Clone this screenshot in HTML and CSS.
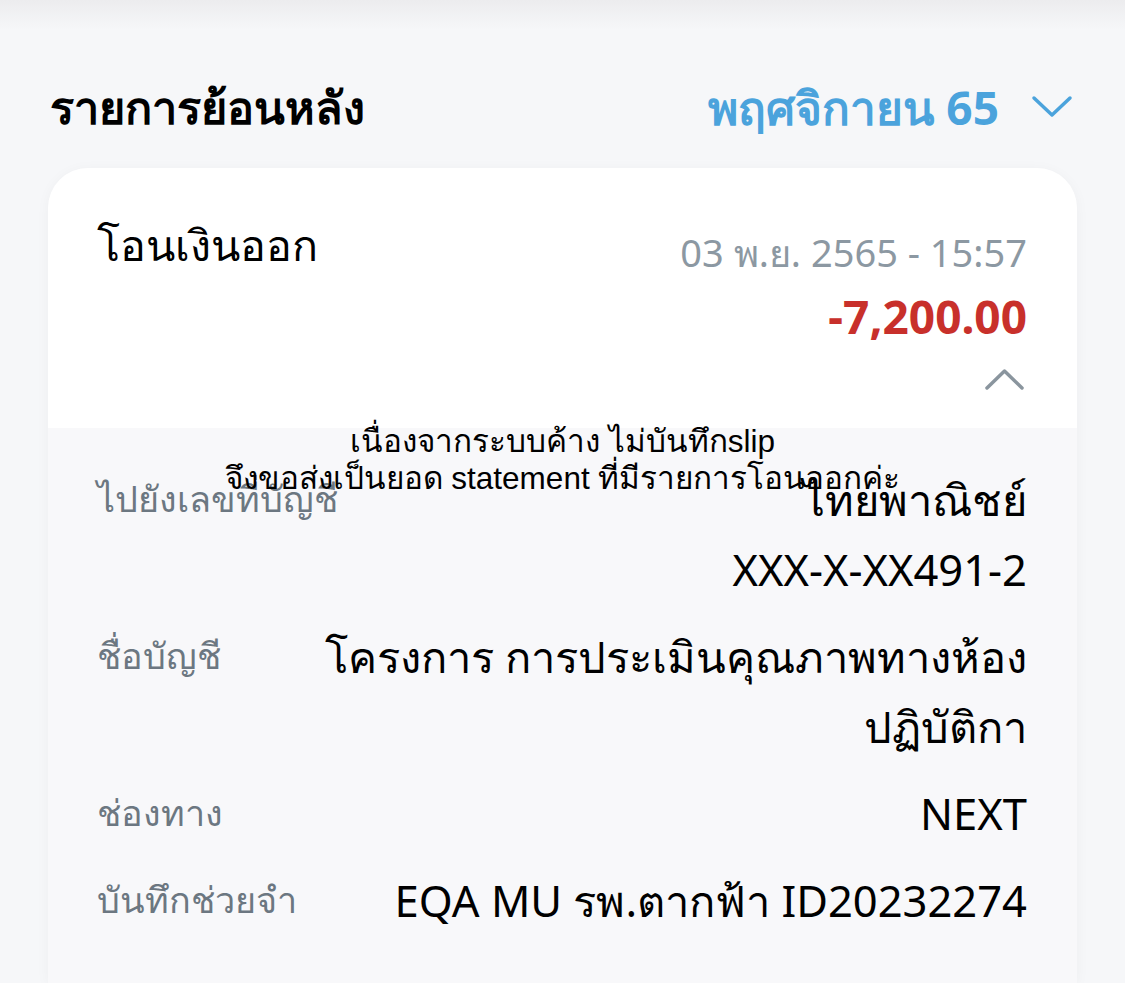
FILE: index.html
```html
<!DOCTYPE html>
<html lang="th">
<head>
<meta charset="utf-8">
<link rel="stylesheet" href="styles.css">
</head>
<body>
<div class="top-shadow"></div>
<div class="section-head">
  <h2 class="section-title">รายการย้อนหลัง</h2>
  <div class="month">
    <span>พฤศจิกายน 65</span>
    <svg class="chev-down" width="42" height="24" viewBox="0 0 42 24"><path d="M3 3 L21 20 L39 3" fill="none" stroke="#4ba3dc" stroke-width="3.5" stroke-linecap="round" stroke-linejoin="round"/></svg>
  </div>
</div>
<div class="card">
  <div class="card-top">
    <div class="tx-row">
      <div class="tx-title">โอนเงินออก</div>
      <div class="tx-right">
        <div class="tx-date">03 พ.ย. 2565 - 15:57</div>
        <div class="tx-amount">-7,200.00</div>
      </div>
    </div>
    <div class="toggle">
      <svg width="41" height="24" viewBox="0 0 41 24"><path d="M3 21 L20.5 4 L38 21" fill="none" stroke="#8a959e" stroke-width="3.5" stroke-linecap="round" stroke-linejoin="round"/></svg>
    </div>
  </div>
  <div class="details">
    <div class="d-row">
      <div class="d-label">ไปยังเลขที่บัญชี</div>
      <div class="d-value">ไทยพาณิชย์<br>XXX-X-XX491-2</div>
    </div>
    <div class="d-row">
      <div class="d-label">ชื่อบัญชี</div>
      <div class="d-value">โครงการ การประเมินคุณภาพทางห้อง<br>ปฏิบัติกา</div>
    </div>
    <div class="d-row">
      <div class="d-label">ช่องทาง</div>
      <div class="d-value">NEXT</div>
    </div>
    <div class="d-row">
      <div class="d-label">บันทึกช่วยจำ</div>
      <div class="d-value">EQA MU รพ.ตากฟ้า ID20232274</div>
    </div>
  </div>
  <div class="note">เนื่องจากระบบค้าง ไม่บันทึกslip<br>จึงขอส่งเป็นยอด statement ที่มีรายการโอนออกค่ะ</div>
</div>
</body>
</html>
```
FILE: styles.css
```css
html, body {
  margin: 0;
  padding: 0;
}
body {
  background: #f6f7f9;
  font-family: "Noto Sans", sans-serif;
  color: #000;
  height: 983px;
  overflow: hidden;
}
.top-shadow {
  height: 30px;
  background: linear-gradient(#ececee, #f6f7f9);
}
.section-head {
  display: flex;
  justify-content: space-between;
  align-items: center;
  padding: 52px 52px 0 50px;
  height: 50px;
}
.section-title {
  margin: 0;
  font-size: 45px;
  font-weight: 700;
  line-height: 50px;
}
.month {
  display: flex;
  align-items: center;
  gap: 32px;
  color: #4ba3dc;
  font-size: 46px;
  font-weight: 700;
  line-height: 50px;
}
.card {
  position: relative;
  margin: 36px 48px 0 48px;
  background: #f8f8fa;
  border-radius: 40px 40px 0 0;
  overflow: hidden;
  box-shadow: 0 2px 14px rgba(0,0,0,0.04);
  height: 815px;
}
.card-top {
  background: #fff;
  height: 260px;
  box-sizing: border-box;
  padding: 52px 50px 0 49px;
}
.tx-row {
  display: flex;
  justify-content: space-between;
}
.tx-title {
  font-size: 43px;
  line-height: 50px;
}
.tx-right {
  text-align: right;
  padding-top: 7px;
}
.tx-date {
  font-size: 38px;
  line-height: 50px;
  color: #8c98a2;
}
.tx-amount {
  font-size: 46px;
  font-weight: 700;
  line-height: 70px;
  margin-top: 4px;
  color: #c8302b;
}
.toggle {
  display: flex;
  justify-content: flex-end;
  margin-top: 16px;
  margin-right: 2px;
}
.details {
  padding: 36px 50px 0 49px;
  display: flex;
  flex-direction: column;
  gap: 17px;
}
.d-row {
  display: flex;
  justify-content: space-between;
  gap: 40px;
}
.d-label {
  font-size: 36px;
  line-height: 70px;
  color: #6c7781;
  white-space: nowrap;
}
.d-value {
  font-size: 43.5px;
  line-height: 70px;
  text-align: right;
}
.note {
  position: absolute;
  left: 0;
  right: 0;
  top: 255px;
  text-align: center;
  font-family: "Liberation Sans", sans-serif;
  font-size: 31.5px;
  line-height: 37px;
  color: #000;
}
```
